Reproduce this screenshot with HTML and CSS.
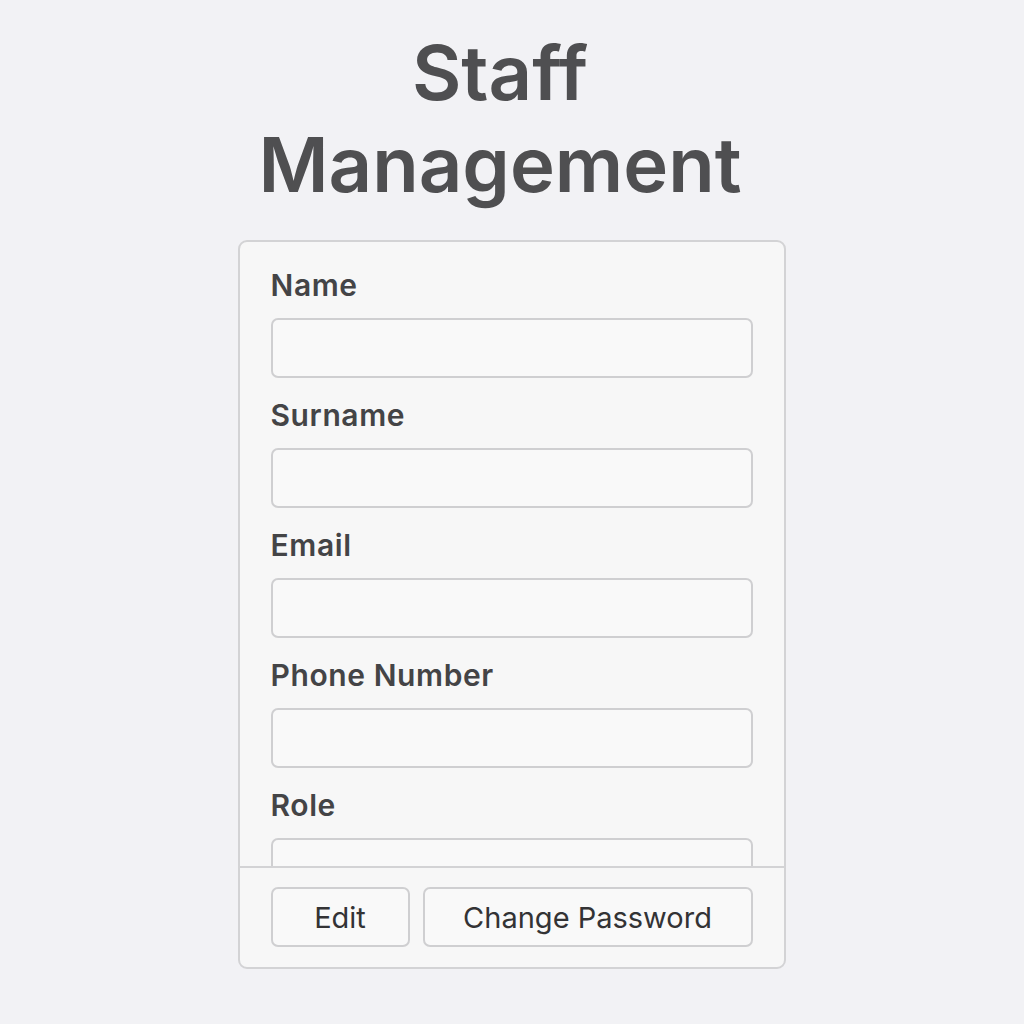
FILE: index.html
```html
<!DOCTYPE html>
<html lang="en">
<head>
<meta charset="utf-8">
<title>Staff Management</title>
<link rel="stylesheet" href="styles.css">
</head>
<body>
<main class="page">
  <h1 class="title">Staff<br>Management</h1>
  <section class="card">
    <div class="card-body">
      <div class="field">
        <label class="label">Name</label>
        <div class="input"></div>
      </div>
      <div class="field">
        <label class="label">Surname</label>
        <div class="input"></div>
      </div>
      <div class="field">
        <label class="label">Email</label>
        <div class="input"></div>
      </div>
      <div class="field">
        <label class="label">Phone Number</label>
        <div class="input"></div>
      </div>
      <div class="field">
        <label class="label">Role</label>
        <div class="input"></div>
      </div>
    </div>
    <div class="card-footer">
      <button class="btn btn-edit">Edit</button>
      <button class="btn btn-pass">Change Password</button>
    </div>
  </section>
</main>
</body>
</html>
```

FILE: styles.css
```css
* { box-sizing: border-box; }
html, body {
  margin: 0;
  padding: 0;
  background: #f2f2f5;
  font-family: Inter, "Noto Sans", sans-serif;
}
.page {
  display: flex;
  flex-direction: column;
  align-items: center;
  padding-top: 26px;
}
.title {
  margin: 0 24px 0 0;
  font-size: 76px;
  line-height: 92px;
  font-weight: 600;
  color: #4f4f51;
  text-align: center;
}
.card {
  margin-top: 30px;
  margin-right: 1px;
  width: 548px;
  height: 729px;
  display: flex;
  flex-direction: column;
  background: #f7f7f7;
  border: 2px solid #d3d3d5;
  border-radius: 9px;
  overflow: hidden;
}
.card-body {
  flex: 1;
  overflow: hidden;
  padding: 26px 31px 0 31px;
  display: flex;
  flex-direction: column;
  gap: 20px;
}
.field {
  display: flex;
  flex-direction: column;
  gap: 15px;
  flex-shrink: 0;
}
.label {
  font-size: 30px;
  line-height: 35px;
  font-weight: 600;
  letter-spacing: 0.6px;
  color: #444446;
}
.input {
  height: 60px;
  border: 2px solid #cfcfd1;
  border-radius: 7px;
  background: #f9f9f9;
}
.card-footer {
  border-top: 2px solid #d3d3d5;
  padding: 19px 31px 20px 31px;
  display: flex;
  gap: 13px;
}
.btn {
  height: 60px;
  font-family: Inter, "Noto Sans", sans-serif;
  font-size: 29px;
  font-weight: 400;
  color: #333335;
  background: #f9f9f9;
  border: 2px solid #cfcfd1;
  border-radius: 7px;
  padding: 0;
}
.btn-edit { width: 139px; }
.btn-pass { flex: 1; }
```
